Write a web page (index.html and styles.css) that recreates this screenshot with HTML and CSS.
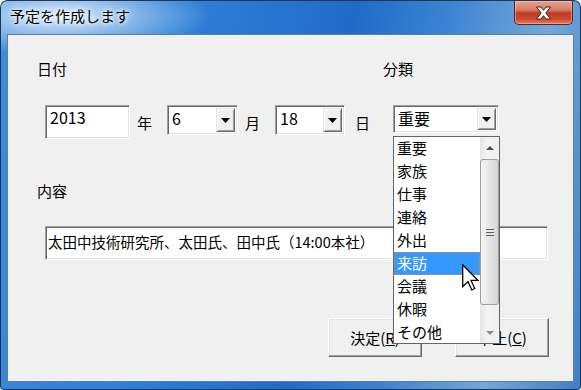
FILE: index.html
```html
<!DOCTYPE html>
<html>
<head>
  <meta charset="UTF-8" />
  <title>予定を作成します</title>
  <link rel="stylesheet" href="styles.css">
</head>
<body>

  <div class="window">
    <!-- title bar -->
    <div class="titlebar">
      <span class="title">予定を作成します</span>
      <div class="close">
        <svg width="17" height="14" viewBox="0 0 17 14">
          <path d="M1.5 1 H6 L8.5 4.3 L11 1 H15.5 L10.8 7 L15.5 13 H11 L8.5 9.7 L6 13 H1.5 L6.2 7 Z" fill="#fff" stroke="#4a1d16" stroke-width="1" stroke-linejoin="round"/>
        </svg>
      </div>
    </div>

    <!-- dialog body -->
    <div class="client">
      <div class="label-row">
        <span class="label date-label">日付</span>
        <span class="label">分類</span>
      </div>

      <div class="field-row">
        <div class="textbox year">2013</div>
        <span class="unit">年</span>
        <div class="combo month">
          <span class="value">6</span>
          <span class="drop"><svg width="9" height="5" viewBox="0 0 9 5"><path d="M0 0 H9 L4.5 5 Z" fill="#000"/></svg></span>
        </div>
        <span class="unit">月</span>
        <div class="combo day">
          <span class="value">18</span>
          <span class="drop"><svg width="9" height="5" viewBox="0 0 9 5"><path d="M0 0 H9 L4.5 5 Z" fill="#000"/></svg></span>
        </div>
        <span class="unit day-unit">日</span>
        <div class="combo category">
          <span class="value">重要</span>
          <span class="drop"><svg width="9" height="5" viewBox="0 0 9 5"><path d="M0 0 H9 L4.5 5 Z" fill="#000"/></svg></span>

          <!-- open dropdown -->
          <div class="list">
            <ul class="items">
              <li>重要</li>
              <li>家族</li>
              <li>仕事</li>
              <li>連絡</li>
              <li>外出</li>
              <li class="selected">来訪</li>
              <li>会議</li>
              <li>休暇</li>
              <li>その他</li>
            </ul>
            <div class="scrollbar">
              <div class="arrow"><svg width="8" height="4" viewBox="0 0 8 4"><path d="M0 4 H8 L4 0 Z" fill="#4d4d4d"/></svg></div>
              <div class="thumb"><span class="grip"></span></div>
              <div class="track"></div>
              <div class="arrow"><svg width="8" height="4" viewBox="0 0 8 4"><path d="M0 0 H8 L4 4 Z" fill="#8a8a8a"/></svg></div>
            </div>
          </div>
        </div>
      </div>

      <div class="label content-label">内容</div>
      <div class="textbox memo">太田中技術研究所、太田氏、田中氏（14:00本社）</div>

      <div class="buttons">
        <button class="btn">決定(<u>R</u>)</button>
        <button class="btn">中止(<u>C</u>)</button>
      </div>
    </div>

    <svg class="cursor" width="17" height="27" viewBox="0 0 12 19">
      <path d="M0.5 0.5 L0.5 16 L4.2 12.4 L6.9 18.3 L9 17.3 L6.4 11.6 L11.3 11.6 Z" fill="#fff" stroke="#000" stroke-width="0.9" stroke-linejoin="miter"/>
    </svg>
  </div>

</body>
</html>
```

FILE: styles.css
```css
body {
  margin: 0;
  padding: 0;
  background: #fff;
  font-family: "Noto Sans CJK JP", "Liberation Sans", sans-serif;
}
.window {
  position: relative;
  width: 581px;
  height: 390px;
  box-sizing: border-box;
  border-radius: 7px 7px 4px 4px;
  background:
    radial-gradient(ellipse 150px 40px at 60px 16px, rgba(230,240,252,0.95), rgba(200,225,250,0.5) 55%, rgba(255,255,255,0) 100%),
    linear-gradient(100deg, #3e8bdc 0%, #2e7fd6 30%, #1f6cc6 55%, #3d85d2 70%, #74a7da 85%, #3f7fc8 100%);
  box-shadow: inset 0 0 0 1px #20354f;
  padding: 0 8px 9px 8px;
  overflow: hidden;
}
.titlebar {
  height: 35px;
  display: flex;
  align-items: flex-start;
  justify-content: space-between;
}
.title {
  margin-top: 7px;
  margin-left: 2px;
  font-size: 15px;
  line-height: 18px;
  color: #000;
  text-shadow: 0 0 6px #fff, 0 0 4px #fff;
}
.close {
  width: 59px;
  height: 24px;
  margin-top: 1px;
  box-sizing: border-box;
  border: 1px solid #5a231b;
  border-top: none;
  border-radius: 0 0 5px 5px;
  background: linear-gradient(#e6a796 0%, #d77865 40%, #c23a24 52%, #c8432b 75%, #e07d5e 100%);
  box-shadow: inset 0 0 0 1px rgba(255,200,190,0.5);
  display: flex;
  align-items: center;
  justify-content: center;
}
.client {
  height: 346px;
  box-sizing: border-box;
  background: #f0f0f0;
  box-shadow: 0 0 0 1px #5b7fa8;
  padding: 25px 24px 0 29px;
  font-size: 15px;
  color: #000;
}
.label-row {
  display: flex;
}
.label {
  line-height: 18px;
}
.date-label {
  width: 346px;
}
.field-row {
  display: flex;
  align-items: flex-start;
  margin-top: 27px;
  margin-left: 8px;
}
.textbox {
  box-sizing: border-box;
  background: #fff;
  border-top: 1px solid #a0a0a0;
  border-left: 1px solid #a0a0a0;
  border-bottom: 1px solid #fff;
  border-right: 1px solid #fff;
  box-shadow: inset 1px 1px #696969, inset -1px -1px #e3e3e3;
  font-size: 16px;
  line-height: 20px;
  padding: 0 4px;
  white-space: nowrap;
  overflow: hidden;
}
.year {
  width: 85px;
  height: 34px;
  padding-top: 1px;
}
.unit {
  line-height: 18px;
  margin: 9px 15px 0 7px;
}
.day-unit {
  margin-left: 10px;
  margin-right: 23px;
}
.combo {
  position: relative;
  display: flex;
  box-sizing: border-box;
  height: 30px;
  background: #fff;
  border-top: 1px solid #a0a0a0;
  border-left: 1px solid #a0a0a0;
  border-bottom: 1px solid #fff;
  border-right: 1px solid #fff;
  box-shadow: inset 1px 1px #696969, inset -1px -1px #e3e3e3;
  padding: 2px 2px 2px 2px;
}
.combo .value {
  flex: 1;
  font-size: 16px;
  line-height: 20px;
  padding: 0 0 0 2px;
}
.drop {
  width: 19px;
  box-sizing: border-box;
  background: #f0f0f0;
  border-top: 1px solid #e3e3e3;
  border-left: 1px solid #e3e3e3;
  border-bottom: 1px solid #696969;
  border-right: 1px solid #696969;
  box-shadow: inset 1px 1px #fff, inset -1px -1px #a0a0a0;
  display: flex;
  align-items: center;
  justify-content: center;
}
.month {
  width: 71px;
}
.day {
  width: 70px;
}
.category {
  width: 106px;
  height: 28px;
}
.list {
  position: absolute;
  left: -1px;
  top: 30px;
  width: 107px;
  height: 208px;
  box-sizing: border-box;
  border: 1px solid #646464;
  background: #fff;
  display: flex;
  z-index: 5;
}
.items {
  list-style: none;
  margin: 0;
  padding: 0;
  flex: 1;
}
.items li {
  height: 23px;
  line-height: 22px;
  padding-left: 3px;
  font-size: 15px;
  box-sizing: border-box;
}
.items li.selected {
  background: #3399ff;
  color: #fff;
  outline: 1px dotted #d9893a;
  outline-offset: -1px;
}
.scrollbar {
  width: 19px;
  display: flex;
  flex-direction: column;
  background: linear-gradient(90deg, #e6e6e6, #f4f4f4 40%, #f0f0f0);
}
.arrow {
  height: 21px;
  display: flex;
  align-items: center;
  justify-content: center;
}
.thumb {
  height: 146px;
  margin: 1px 0 0 0;
  box-sizing: border-box;
  border: 1px solid #9c9c9c;
  border-radius: 3px;
  background: linear-gradient(90deg, #f4f4f4, #e6e6e6 50%, #d4d4d4);
  display: flex;
  align-items: center;
  justify-content: center;
}
.grip {
  width: 8px;
  height: 7px;
  background: repeating-linear-gradient(#5e5e5e 0 1px, #e8e8e8 1px 3px);
}
.track {
  flex: 1;
}
.content-label {
  margin-top: 43px;
}
.memo {
  width: 503px;
  height: 34px;
  margin: 26px 0 0 8px;
  padding-top: 5px;
  padding-left: 2px;
  font-size: 14.5px;
}
.buttons {
  display: flex;
  justify-content: flex-end;
  gap: 33px;
  margin-top: 58px;
}
.btn {
  width: 94px;
  height: 39px;
  box-sizing: border-box;
  background: #f0f0f0;
  border-top: 1px solid #fff;
  border-left: 1px solid #fff;
  border-bottom: 1px solid #696969;
  border-right: 1px solid #696969;
  box-shadow: inset -1px -1px #a0a0a0, inset 1px 1px #e3e3e3;
  font-family: "Noto Sans CJK JP", "Liberation Sans", sans-serif;
  font-size: 15px;
  color: #000;
  padding: 0;
}
.cursor {
  position: absolute;
  left: 462px;
  top: 264px;
  z-index: 10;
}
```
